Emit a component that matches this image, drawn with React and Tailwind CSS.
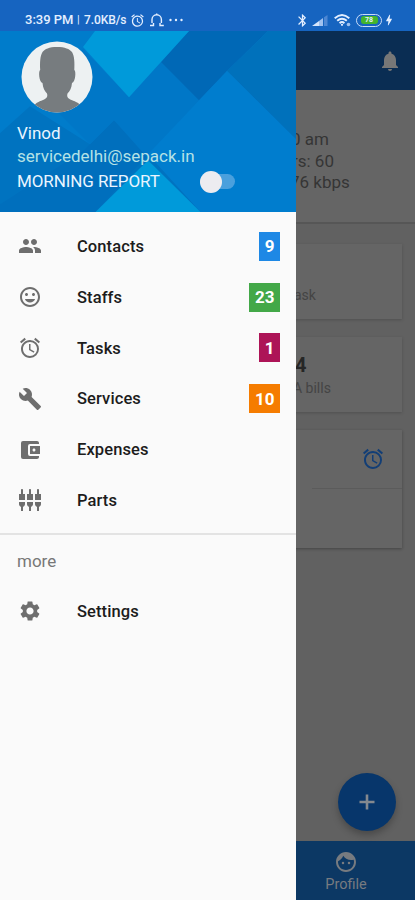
import React from "react";
import {
  MdPeople, MdMood, MdAccessAlarm, MdBuild, MdAccountBalanceWallet,
  MdSettingsInputComponent, MdSettings, MdNotifications, MdFace,
  MdBluetooth, MdBolt,
} from "react-icons/md";

const items = [
  { label: "Contacts", Icon: MdPeople, count: "9", color: "bg-[#1e88e5]" },
  { label: "Staffs", Icon: MdMood, count: "23", color: "bg-[#43a848]" },
  { label: "Tasks", Icon: MdAccessAlarm, count: "1", color: "bg-[#ad1457]" },
  { label: "Services", Icon: MdBuild, count: "10", color: "bg-[#f57c00]" },
  { label: "Expenses", Icon: MdAccountBalanceWallet },
  { label: "Parts", Icon: MdSettingsInputComponent },
];

function Row({ label, Icon, count, color }) {
  return (
    <div className="flex h-[50.8px] items-center pl-[18px] pr-4">
      <Icon className="size-6 shrink-0 text-[#6e6e6e]" />
      <span className="ml-[35px] flex-1 pt-[2px] text-[16.5px] font-medium tracking-[0.1px] text-[#1c1c1c]">{label}</span>
      {count && (
        <span className={`flex h-[29px] items-center px-[5.5px] pt-[1px] text-[17px] font-bold text-white ${color}`}>{count}</span>
      )}
    </div>
  );
}

function StatusBar() {
  return (
    <div className="flex h-[31px] shrink-0 items-center bg-[#1664c0] pl-[25px] pr-[19px] pt-[9px] text-[#e4efff]">
      <span className="w-[52px] whitespace-nowrap text-[13px] font-medium">3:39 PM</span>
      <span className="w-[4px] text-[11px]">|</span>
      <span className="ml-[3px] w-[44px] whitespace-nowrap text-[12px] font-medium tracking-[-0.1px]">7.0KB/s</span>
      <MdAccessAlarm className="ml-[2px] size-[15px]" />
      <svg className="ml-[4px] h-[14px] w-[16px]" viewBox="0 0 16 14" fill="none" stroke="currentColor" strokeWidth="1.4">
        <path d="M1 12.500h3.500V10M3 10V6.500a4.700 4.700 0 0 1 9.400 0V10M11 10v2.500h3.800M7.700 2V.6" />
      </svg>
      <svg className="ml-[4px] h-[4px] w-[15px]" viewBox="0 0 15 4" fill="currentColor">
        <circle cx="1.500" cy="2" r="1.200" /><circle cx="7" cy="2" r="1.200" /><circle cx="12.500" cy="2" r="1.200" />
      </svg>
      <span className="flex-1" />
      <MdBluetooth className="size-[15px]" />
      <svg className="ml-[2px] h-[12px] w-[16px]" viewBox="0 0 16 12">
        <path d="M0 12 7 7v5z" fill="#d5e5fb" /><path d="M7 7 11 4v8H7z" fill="#9fc1ef" /><path d="M12 3.300 15.500 1v11H12z" fill="#4d87d3" />
      </svg>
      <svg className="ml-[6px] h-[14px] w-[17px]" viewBox="0 0 17 14" fill="none" stroke="currentColor" strokeWidth="1.900">
        <path d="M.7 5.200q7.300-6.500 14.600 0M3.200 7.800q4.800-4.300 9.600 0M5.600 10.200q2.400-2.200 4.800 0" />
        <circle cx="8" cy="11.800" r="1.100" fill="currentColor" stroke="none" /><circle cx="14.500" cy="11.500" r="1.800" fill="#9fc1ef" stroke="none" />
      </svg>
      <span className="ml-[5px] flex h-[13px] w-[26px] items-center justify-center rounded-full border-[1.5px] border-[#c8dcf8] bg-[#1664c0]">
        <span className="flex h-[8px] w-[17px] items-center justify-center rounded-[3px] bg-[#43b52c] text-[7px] font-bold">78</span>
      </span>
      <MdBolt className="size-[14px]" />
    </div>
  );
}

function Drawer() {
  return (
    <aside className="absolute bottom-0 left-0 top-0 w-[296px] bg-[#fafafa]">
      <div className="relative h-[180.500px] overflow-hidden bg-[#007ccb]">
        <svg className="absolute inset-0 h-full w-full" viewBox="0 0 296 180" preserveAspectRatio="none">
          <path d="M0 102 30 75l60 38 24-24 92 92H0z" fill="#0073c0" />
          <path d="m114 89 34 34-53 58H0v-8l84-54z" fill="#006fbd" />
          <path d="m83 18 46 48 32-35 38 38-46 54-5 4-34-38-24 24-38-38z" fill="#0077c7" />
          <path d="M189 0h79l-41 40-28 29-38-38z" fill="#0068b6" />
          <path d="M268 0h28v108l-69-68z" fill="#0071bb" />
          <path d="m227 40 69 68v73h-95L148 123z" fill="#007dce" />
          <path d="M95 0h94l-60 66-46-50z" fill="#009ada" />
          <path d="m148 129 53 52H95z" fill="#009ada" />
        </svg>
        <div className="relative pl-[17px]">
          <div className="pl-[4px] pt-[9.500px]">
            <svg className="size-[72px]" viewBox="0 0 72 72">
              <defs><clipPath id="avatar"><circle cx="36" cy="36" r="35.500" /></clipPath></defs>
              <g clipPath="url(#avatar)">
                <path fill="#edf1f2" d="M0 0h72v72H0z" />
                <path fill="#777c7f" d="M36 6c-8 0-12 2-14.500 5C19 15 18.800 22 19.200 29c-2 1-1.200 12 2.300 13 .5 5 2 8 4.500 10.500 1 3.500-.5 5-4 6.500-5 2-7 3-8.500 5V72h46v-8c-2-2-4-3-9-5-3.500-1.500-5-3-4-6.500 2.500-2.500 4-5.500 4.500-10.500 3.500-1 4.300-12 2.300-13 .4-7 .2-14-2.300-18C48.500 8 44 6 36 6z" />
              </g>
            </svg>
          </div>
          <div className="mt-[9.500px] h-[23px] text-[17px] leading-[23px] text-[#eaf5ff]">Vinod</div>
          <div className="h-[24px] text-[17px] leading-[23px] text-[#b5e2e6]">servicedelhi@sepack.in</div>
          <div className="flex h-[25px] items-center text-[17px] text-[#eaf5ff]">
            <span className="w-[183px] whitespace-nowrap tracking-[-0.1px]">MORNING REPORT</span>
            <span className="flex h-[15px] w-[35px] items-center rounded-full bg-[#4aa0dd]">
              <span className="size-[22px] rounded-full bg-[#ececf0]" />
            </span>
          </div>
        </div>
      </div>
      <nav className="pt-[9.500px]">
        {items.map((item) => <Row key={item.label} {...item} />)}
      </nav>
      <div className="mt-[7.500px] border-t-2 border-[#e3e3e3] pl-[17px] pt-[14px] text-[17px] leading-6 text-[#777]">more</div>
      <div className="mt-[12.500px]"><Row label="Settings" Icon={MdSettings} /></div>
    </aside>
  );
}

export default function App() {
  return (
    <div className="flex h-[900px] w-[415px] flex-col overflow-hidden font-[Roboto,sans-serif]">
      <StatusBar />
      <div className="relative flex-1 bg-[#616161]">
        <main className="flex h-full flex-col">
          <header className="flex h-[59px] items-center justify-end bg-[#0a2d53] pr-[13px]">
            <MdNotifications className="size-6 text-[#777]" />
          </header>
          <section className="h-[134px] border-b-2 border-[#565656] bg-[#656565] pl-[290px] pt-[39px] text-[17px] leading-[21.500px] text-[#353535]">
            <div className="whitespace-nowrap pl-[1px]">0 am</div>
            <div className="whitespace-nowrap pl-[2px]">rs: 60</div>
            <div className="whitespace-nowrap">76 kbps</div>
          </section>
          <div className="flex flex-col pr-[13px]">
            <section className="mt-[20px] h-[75px] bg-[#656565] pl-[294px] pt-[41px] text-[14px] text-[#444] shadow-[0_1px_3px_rgba(0,0,0,0.18)]">ask</section>
            <section className="mt-[18px] h-[75px] bg-[#656565] pl-[295px] pt-[14px] text-[#444] shadow-[0_1px_3px_rgba(0,0,0,0.18)]">
              <div className="text-[20px] font-bold leading-[28px] text-[#262626]">4</div>
              <div className="-ml-[2px] text-[14px] leading-[19px]">A bills</div>
            </section>
            <section className="mt-[18px] h-[118px] bg-[#656565] shadow-[0_1px_3px_rgba(0,0,0,0.3)]">
              <div className="ml-[312px] flex h-[59px] items-center justify-end border-b border-[#5b5b5b] pr-[17.500px]">
                <MdAccessAlarm className="size-6 text-[#123e76]" />
              </div>
            </section>
          </div>
          <div className="flex-1" />
          <footer className="flex h-[59px] flex-col items-center bg-[#0c3864] pl-[277px] pt-[9px] text-[#777b80]">
            <MdFace className="size-6" />
            <span className="text-[14.500px] leading-[21px]">Profile</span>
          </footer>
        </main>
        <button className="absolute bottom-[69px] right-[19px] flex size-[58px] items-center justify-center rounded-full bg-[#07366b] text-[#84898f] shadow-[0_4px_7px_rgba(0,0,0,0.25)]">
          <svg className="size-4" viewBox="0 0 16 16" fill="none" stroke="currentColor" strokeWidth="2.6">
            <path d="M8 .5v15M.5 8h15" />
          </svg>
        </button>
        <Drawer />
      </div>
    </div>
  );
}
